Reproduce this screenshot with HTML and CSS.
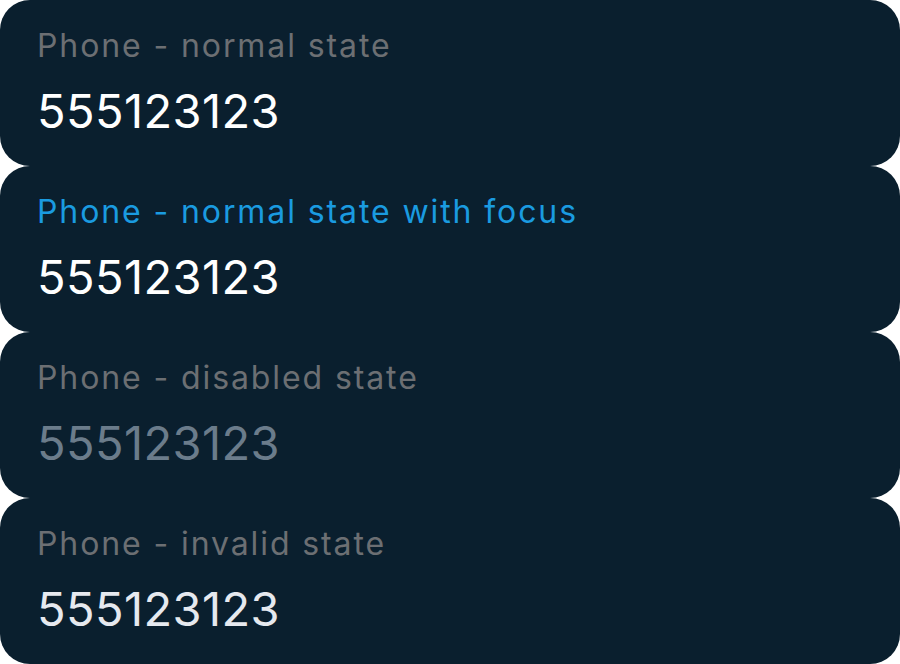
FILE: index.html
```html
<!DOCTYPE html>
<html>
<head>
<meta charset="utf-8">
<link rel="stylesheet" href="styles.css">
</head>
<body>
<div class="list">
  <div class="field">
    <div class="label">Phone - normal state</div>
    <div class="value">555123123</div>
  </div>
  <div class="field">
    <div class="label focus">Phone - normal state with focus</div>
    <div class="value">555123123</div>
  </div>
  <div class="field">
    <div class="label">Phone - disabled state</div>
    <div class="value disabled">555123123</div>
  </div>
  <div class="field">
    <div class="label">Phone - invalid state</div>
    <div class="value invalid">555123123</div>
  </div>
</div>
</body>
</html>
```
FILE: styles.css
```css
html, body {
  margin: 0;
  padding: 0;
  background: #ffffff;
}
body {
  width: 900px;
  height: 664px;
  font-family: Inter, "Noto Sans", sans-serif;
}
.list {
  display: flex;
  flex-direction: column;
}
.field {
  height: 166px;
  box-sizing: border-box;
  background: #0a1f2e;
  border-radius: 30px;
  padding: 27px 37px 0 37px;
  display: flex;
  flex-direction: column;
}
.label {
  font-size: 32px;
  line-height: 38px;
  color: #6c6f73;
  letter-spacing: 1.9px;
}
.label.focus {
  color: #1a9be0;
}
.value {
  margin-top: 19px;
  font-size: 47px;
  line-height: 54px;
  color: #ffffff;
  letter-spacing: 0.4px;
}
.value.disabled {
  color: #6b7c8b;
}
.value.invalid {
  color: #e6e9ef;
}
```
